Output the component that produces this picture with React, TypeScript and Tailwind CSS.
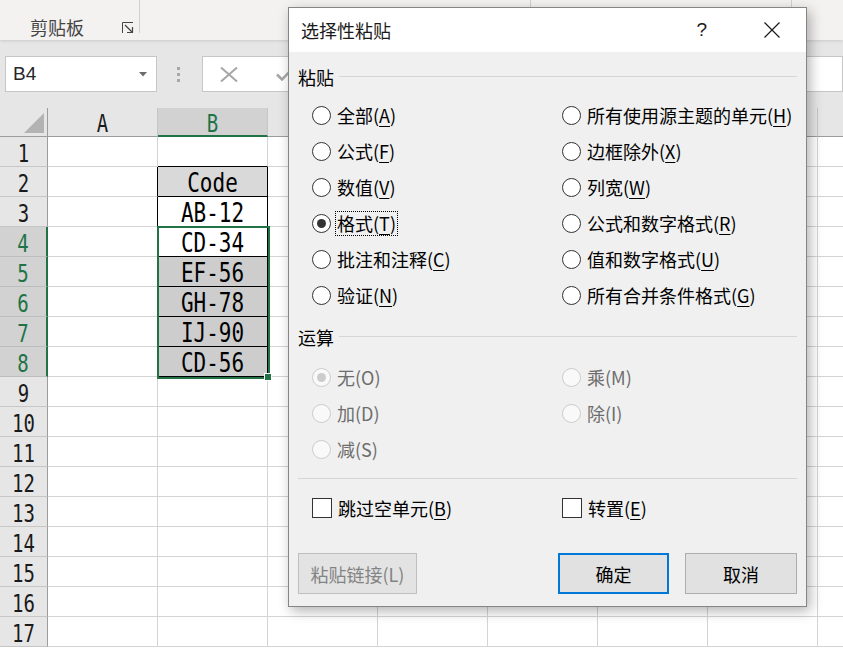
import React from 'react';

const COLS = ['A', 'B', 'C', 'D', 'E', 'F', 'G', 'H'];
const DATA: Record<number, string> = {
  2: 'Code',
  3: 'AB-12',
  4: 'CD-34',
  5: 'EF-56',
  6: 'GH-78',
  7: 'IJ-90',
  8: 'CD-56',
};
const ROWS = Array.from({ length: 17 }, (_, i) => i + 1);

function Mono({ children, big }: { children: React.ReactNode; big?: boolean }) {
  return big ? (
    <span className="inline-block font-['DejaVu_Sans_Mono',monospace] text-[21px] leading-[20px] scale-y-125 text-black">
      {children}
    </span>
  ) : (
    <span className="inline-block font-['DejaVu_Sans_Mono',monospace] text-[19px] leading-[20px] scale-y-130">
      {children}
    </span>
  );
}

function Radio({ checked, disabled }: { checked?: boolean; disabled?: boolean }) {
  return (
    <span
      className={
        disabled
          ? 'w-[19px] h-[19px] rounded-full border border-[#cccccc] bg-[#f9f9f9] flex items-center justify-center shrink-0'
          : 'w-[19px] h-[19px] rounded-full border border-[#333333] bg-white flex items-center justify-center shrink-0'
      }
    >
      {checked && (
        <span
          className={
            disabled
              ? 'w-[9px] h-[9px] rounded-full bg-[#cccccc]'
              : 'w-[9px] h-[9px] rounded-full bg-[#333333]'
          }
        />
      )}
    </span>
  );
}

function Opt({
  label,
  k,
  checked,
  focus,
}: {
  label: string;
  k: string;
  checked?: boolean;
  focus?: boolean;
}) {
  return (
    <div className="h-[36px] flex items-center gap-[6px]">
      <Radio checked={checked} />
      {focus ? (
        <span className="-ml-[2px] border border-dotted border-black px-[1px] text-[18px] leading-[23px] text-black whitespace-nowrap">
          {label}(<span className="underline decoration-1 underline-offset-[3px]">{k}</span>)
        </span>
      ) : (
        <span className="text-[18px] leading-[20px] text-black whitespace-nowrap">
          {label}(<span className="underline decoration-1 underline-offset-[3px]">{k}</span>)
        </span>
      )}
    </div>
  );
}

function DisOpt({ label, checked }: { label: string; checked?: boolean }) {
  return (
    <div className="h-[36px] flex items-center gap-[6px]">
      <Radio checked={checked} disabled />
      <span className="text-[18px] leading-[20px] text-[#6d6d6d] whitespace-nowrap">{label}</span>
    </div>
  );
}

function Check({ label, k }: { label: string; k: string }) {
  return (
    <div className="h-[20px] flex items-center gap-[6px]">
      <span className="w-[20px] h-[20px] border border-[#333333] bg-white shrink-0" />
      <span className="text-[18px] leading-[20px] text-black whitespace-nowrap">
        {label}(<span className="underline decoration-1 underline-offset-[3px]">{k}</span>)
      </span>
    </div>
  );
}

function GroupLabel({ text }: { text: string }) {
  return (
    <div className="h-[20px] flex items-center gap-[5px]">
      <span className="text-[18px] leading-[20px] text-black">{text}</span>
      <span className="flex-1 h-px bg-[#d5d5d5] -mt-[2px]" />
    </div>
  );
}

function Sheet() {
  return (
    <div className="relative grid grid-cols-[48px_repeat(8,110px)] grid-rows-[29px_repeat(17,30px)]">
      {/* header row */}
      <div className="bg-[#e6e6e6] border-r border-r-[#9c9c9c] border-b border-b-[#9c9c9c] flex items-end justify-end pr-[3px] pb-[3px]">
        <svg width="20" height="20" viewBox="0 0 20 20">
          <polygon points="20,0 20,20 0,20" fill="#b3b3b3" />
        </svg>
      </div>
      {COLS.map((c) =>
        c === 'B' ? (
          <div
            key={c}
            className="bg-[#d2d2d2] border-r border-r-[#c6c6c6] border-b-2 border-b-[#217346] flex items-center justify-center text-[#217346] pt-[3px]"
          >
            <Mono>{c}</Mono>
          </div>
        ) : (
          <div
            key={c}
            className="bg-[#e6e6e6] border-r border-r-[#c6c6c6] border-b border-b-[#9c9c9c] flex items-center justify-center text-[#1a1a1a] pt-[2px]"
          >
            {c === 'A' ? <Mono>{c}</Mono> : null}
          </div>
        )
      )}
      {ROWS.map((r) => {
        const sel = r >= 4 && r <= 8;
        const inBox = r >= 2 && r <= 8;
        return (
          <React.Fragment key={r}>
            <div
              className={
                sel
                  ? 'bg-[#d2d2d2] text-[#217346] border-r-2 border-r-[#217346] border-b border-b-[#bdbdbd] flex items-center justify-center pt-[2px]'
                  : 'bg-[#e6e6e6] text-[#1a1a1a] border-r border-r-[#9c9c9c] border-b border-b-[#c6c6c6] flex items-center justify-center pt-[2px]'
              }
            >
              <Mono>{r}</Mono>
            </div>
            {COLS.map((c) => {
              if (c === 'A') {
                return (
                  <div
                    key={c}
                    className={
                      inBox
                        ? 'bg-white border-b border-b-[#d4d4d4] border-r border-r-black'
                        : 'bg-white border-b border-b-[#d4d4d4] border-r border-r-[#d4d4d4]'
                    }
                  />
                );
              }
              if (c === 'B') {
                if (r === 1) {
                  return <div key={c} className="bg-white border-b border-b-black border-r border-r-[#d4d4d4]" />;
                }
                if (inBox) {
                  const bg =
                    r === 2
                      ? 'bg-[#d9d9d9]'
                      : r === 3 || r === 4
                      ? 'bg-white'
                      : 'bg-[#cdcdcd]';
                  return (
                    <div
                      key={c}
                      className={`${bg} border-b border-b-black border-r border-r-black flex items-center justify-center pt-[3px]`}
                    >
                      <Mono big>{DATA[r]}</Mono>
                    </div>
                  );
                }
              }
              return <div key={c} className="bg-white border-b border-b-[#d4d4d4] border-r border-r-[#d4d4d4]" />;
            })}
          </React.Fragment>
        );
      })}
      {/* selection border */}
      <div className="absolute left-[157px] top-[118px] w-[113px] h-[153px] border-2 border-[#217346] pointer-events-none" />
      <div className="absolute left-[264px] top-[265px] w-[8px] h-[8px] bg-[#217346] border border-white" />
    </div>
  );
}

function Dialog() {
  return (
    <div className="absolute z-30 left-[288px] top-[7px] w-[519px] h-[600px] border border-[#858585] bg-[#f0f0f0] shadow-[3px_4px_12px_rgba(0,0,0,0.3)] flex flex-col">
      <div className="h-[44px] bg-white flex items-center pl-[12px] pr-[26px]">
        <span className="text-[18px] leading-[22px] text-[#1a1a1a]">选择性粘贴</span>
        <span className="ml-auto font-['Liberation_Sans',sans-serif] text-[19px] leading-[22px] text-[#1a1a1a]">?</span>
        <svg className="ml-[57px]" width="16" height="16" viewBox="0 0 16 16">
          <path d="M0.5 0.5L15.5 15.5M15.5 0.5L0.5 15.5" stroke="#1a1a1a" strokeWidth="1.2" />
        </svg>
      </div>
      <div className="flex-1 px-[9px] pt-[15px] flex flex-col">
        <GroupLabel text="粘贴" />
        <div className="mt-[10px] pl-[14px] grid grid-cols-[250px_1fr]">
          <Opt label="全部" k="A" />
          <Opt label="所有使用源主题的单元" k="H" />
          <Opt label="公式" k="F" />
          <Opt label="边框除外" k="X" />
          <Opt label="数值" k="V" />
          <Opt label="列宽" k="W" />
          <Opt label="格式" k="T" checked focus />
          <Opt label="公式和数字格式" k="R" />
          <Opt label="批注和注释" k="C" />
          <Opt label="值和数字格式" k="U" />
          <Opt label="验证" k="N" />
          <Opt label="所有合并条件格式" k="G" />
        </div>
        <div className="mt-[14px]">
          <GroupLabel text="运算" />
        </div>
        <div className="mt-[12px] pl-[14px] grid grid-cols-[250px_1fr]">
          <DisOpt label="无(O)" checked />
          <DisOpt label="乘(M)" />
          <DisOpt label="加(D)" />
          <DisOpt label="除(I)" />
          <DisOpt label="减(S)" />
          <div />
        </div>
        <div className="mt-[11px] h-px bg-[#d5d5d5]" />
        <div className="mt-[19px] pl-[14px] grid grid-cols-[250px_1fr]">
          <Check label="跳过空单元" k="B" />
          <Check label="转置" k="E" />
        </div>
        <div className="mt-[35px] flex">
          <div className="w-[119px] h-[41px] bg-[#e3e3e3] border border-[#bfbfbf] flex items-center justify-center text-[18px] leading-[20px] text-[#838383]">
            粘贴链接(L)
          </div>
          <div className="ml-auto w-[111px] h-[41px] bg-[#e1e1e1] border-2 border-[#0078d7] flex items-center justify-center text-[18px] leading-[20px] text-black">
            确定
          </div>
          <div className="ml-[16px] w-[112px] h-[41px] bg-[#e1e1e1] border border-[#adadad] flex items-center justify-center text-[18px] leading-[20px] text-black">
            取消
          </div>
        </div>
      </div>
    </div>
  );
}

export default function App() {
  return (
    <div className="relative w-[843px] h-[648px] overflow-hidden bg-white font-['Noto_Sans_CJK_SC',sans-serif]">
      {/* ribbon */}
      <div className="relative z-10 h-[40px] bg-[#f3f2f1] flex shadow-[0_1px_3px_rgba(0,0,0,0.12)]">
        <div className="w-[140px] h-[33px] border-r border-r-[#d2d0ce] flex items-start pt-[16px] pl-[30px] pr-[5px]">
          <span className="text-[18px] leading-[22px] text-[#444444]">剪贴板</span>
          <svg className="ml-auto mt-[6px]" width="12" height="12" viewBox="0 0 12 12">
            <path d="M0.5 11V0.5H11" stroke="#444" strokeWidth="1" fill="none" />
            <path d="M3 3L10.5 10.5" stroke="#444" strokeWidth="1.2" fill="none" />
            <path d="M10.5 5V10.5H5" stroke="#444" strokeWidth="1.2" fill="none" />
          </svg>
        </div>
        <div className="w-[391px] h-[33px] border-r border-r-[#d2d0ce]" />
        <div className="w-[261px] h-[33px] border-r border-r-[#d2d0ce]" />
      </div>
      {/* formula bar */}
      <div className="h-[68px] bg-[#e6e6e6] flex items-center pl-[5px]">
        <div className="w-[152px] h-[36px] bg-white border border-[#c6c6c6] flex items-center pl-[7px] pr-[9px]">
          <span className="font-['Liberation_Sans',sans-serif] text-[19px] leading-[22px] text-[#262626]">B4</span>
          <svg className="ml-auto" width="8" height="5" viewBox="0 0 8 5">
            <path d="M0 0H8L4 4.5Z" fill="#6b6b6b" />
          </svg>
        </div>
        <div className="ml-[20px] flex flex-col gap-[3px]">
          <span className="w-[3px] h-[3px] bg-[#a8a8a8]" />
          <span className="w-[3px] h-[3px] bg-[#a8a8a8]" />
          <span className="w-[3px] h-[3px] bg-[#a8a8a8]" />
        </div>
        <div className="ml-[22px] flex-1 h-[36px] bg-white border border-[#c6c6c6] flex items-center pl-[17px] gap-[38px]">
          <svg width="18" height="15" viewBox="0 0 18 15">
            <path d="M1 0.5L17 14.5M17 0.5L1 14.5" stroke="#a6a6a6" strokeWidth="2" />
          </svg>
          <svg width="17" height="13" viewBox="0 0 17 13">
            <path d="M1 6.5L6 11.5L16 1" stroke="#a6a6a6" strokeWidth="2.5" fill="none" />
          </svg>
        </div>
      </div>
      <Sheet />
      <Dialog />
    </div>
  );
}
